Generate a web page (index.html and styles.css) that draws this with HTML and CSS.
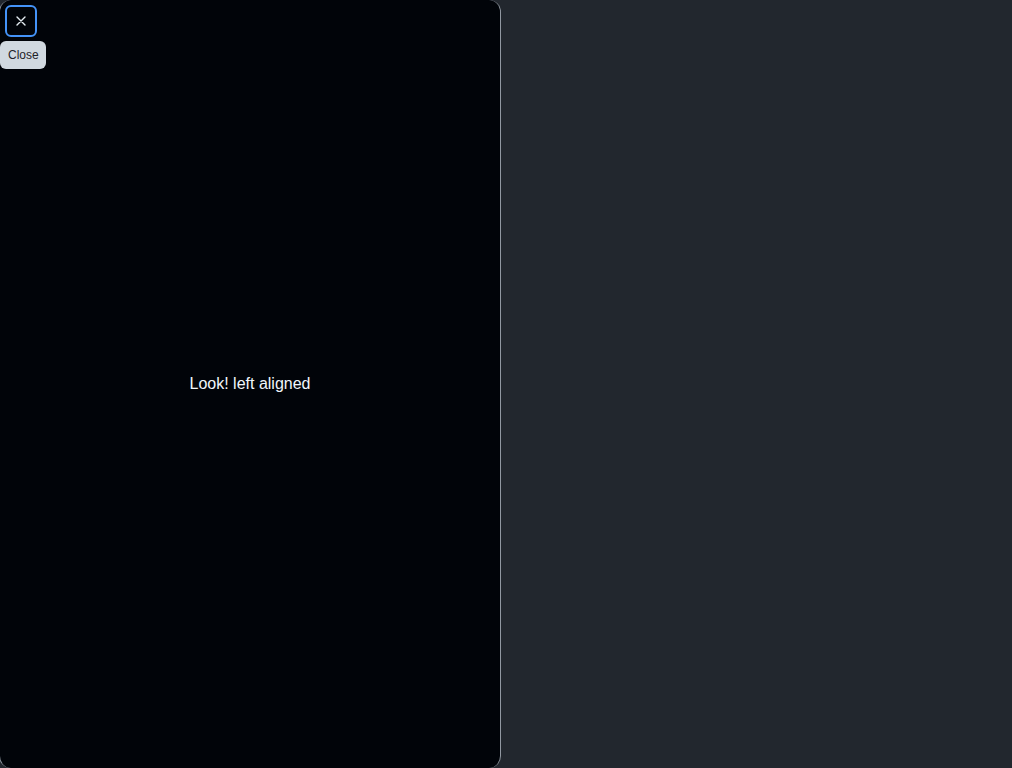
FILE: index.html
```html
<!DOCTYPE html>
<html>
<head>
<meta charset="utf-8">
<link rel="stylesheet" href="styles.css">
</head>
<body>
<div class="page">
  <aside class="drawer">
    <div class="drawer-body">Look! left aligned</div>
    <button class="close-btn" aria-label="Close">
      <svg width="12" height="12" viewBox="0 0 12 12"><path d="M2 2L10 10M10 2L2 10" stroke="#e6edf3" stroke-width="1.4" stroke-linecap="round"/></svg>
    </button>
    <div class="tooltip">Close</div>
  </aside>
</div>
</body>
</html>
```
FILE: styles.css
```css
html, body {
  margin: 0;
  padding: 0;
  height: 100%;
  background: #22272e;
  font-family: "Liberation Sans", Arial, sans-serif;
}
.page {
  height: 768px;
  display: flex;
  overflow: hidden;
}
.drawer {
  position: relative;
  width: 502px;
  height: 768px;
  margin-left: -1px;
  box-sizing: border-box;
  background: #010409;
  border-left: 1px solid #9198a1;
  border-right: 1px solid #9198a1;
  border-radius: 12px;
  display: flex;
  align-items: center;
  justify-content: center;
}
.drawer-body {
  color: #f0f6fc;
  font-size: 16px;
}
.close-btn {
  position: absolute;
  left: 5px;
  top: 5px;
  width: 32px;
  height: 32px;
  box-sizing: border-box;
  border: 2px solid #4493f8;
  border-radius: 6px;
  background: #010409;
  padding: 0;
  display: flex;
  align-items: center;
  justify-content: center;
}
.tooltip {
  position: absolute;
  left: 0;
  top: 41px;
  height: 28px;
  padding: 0 7px 0 8px;
  box-sizing: border-box;
  background: #d1d9e0;
  color: #1f2328;
  font-size: 12px;
  border-radius: 6px;
  display: flex;
  align-items: center;
}
```
